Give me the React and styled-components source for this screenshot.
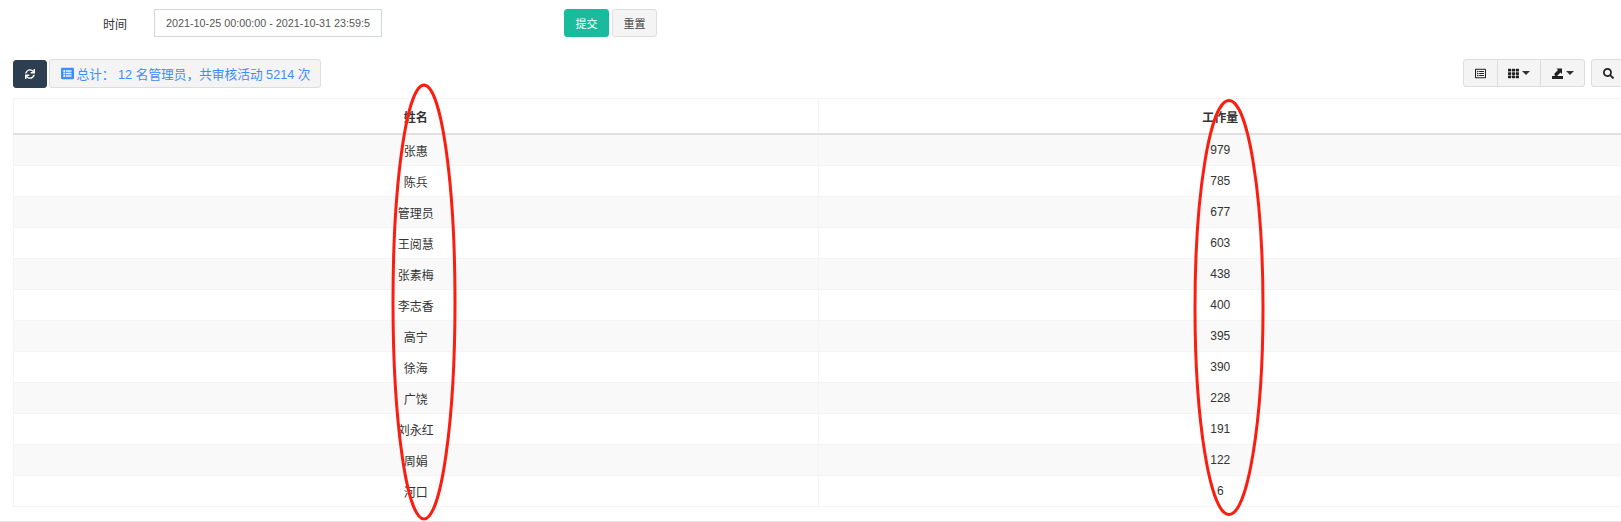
import React from 'react';
import styled, { createGlobalStyle } from 'styled-components';
import { FaSync, FaTh, FaSearch, FaRegListAlt, FaListAlt } from 'react-icons/fa';

const rows = [
  ['张惠', 979],
  ['陈兵', 785],
  ['管理员', 677],
  ['王阅慧', 603],
  ['张素梅', 438],
  ['李志香', 400],
  ['高宁', 395],
  ['徐海', 390],
  ['广饶', 228],
  ['刘永红', 191],
  ['周娟', 122],
  ['河口', 6],
];

const GlobalStyle = createGlobalStyle`
  html, body {
    margin: 0;
    background: #fff;
    overflow: hidden;
  }
  body {
    font-family: "Liberation Sans", "Noto Sans CJK SC", sans-serif;
    font-size: 12px;
    color: #333;
  }
`;

const Page = styled.div`
  position: relative;
  width: 1623px;
  height: 522px;
  box-sizing: border-box;
  padding: 9px 0 0 13px;
  overflow: hidden;
  border-bottom: 1px solid #e4e4e4;
`;

const SearchForm = styled.form`
  display: flex;
  align-items: center;
  height: 28px;
`;

const FieldLabel = styled.label`
  width: 114px;
  box-sizing: border-box;
  text-align: right;
  font-size: 12px;
  font-weight: 400;
`;

const DateInput = styled.div`
  width: 228px;
  height: 28px;
  margin-left: 27px;
  box-sizing: border-box;
  border: 1px solid #d2d6de;
  padding: 0 0 0 11px;
  line-height: 26px;
  font-size: 10.8px;
  color: #555;
  white-space: nowrap;
`;

const FormActions = styled.div`
  display: flex;
  gap: 3px;
  margin-left: 182px;
`;

const Button = styled.button`
  height: 28px;
  width: ${({ $width }) => $width || 45}px;
  padding: 0;
  display: inline-flex;
  align-items: center;
  justify-content: center;
  gap: 3px;
  box-sizing: border-box;
  font-family: inherit;
  font-size: 11px;
  border-radius: 3px;
  border: 1px solid ${({ $variant }) => ($variant === 'primary' ? '#18bc9c' : $variant === 'dark' ? '#2c3e50' : '#ddd')};
  background: ${({ $variant }) => ($variant === 'primary' ? '#18bc9c' : $variant === 'dark' ? '#2c3e50' : '#f4f4f4')};
  color: ${({ $variant }) => ($variant === 'primary' || $variant === 'dark' ? '#fff' : '#444')};
`;

const Toolbar = styled.div`
  display: flex;
  align-items: flex-start;
  justify-content: space-between;
  width: 1610px;
  margin-top: 22px;
  height: 39px;
`;

const ToolbarLeft = styled.div`
  display: flex;
  align-items: center;
  gap: 2px;
`;

const TotalBadge = styled.div`
  height: 29px;
  width: 272px;
  display: flex;
  align-items: center;
  justify-content: center;
  gap: 2px;
  padding-left: 2px;
  box-sizing: border-box;
  border: 1px solid #ddd;
  border-radius: 3px;
  background: #f4f4f4;
  color: #3c8dff;
  font-size: 12.7px;
  white-space: nowrap;
`;

const ToolbarRight = styled.div`
  display: flex;
  align-items: center;
  gap: 6px;
  margin-right: -2px;
`;

const ButtonGroup = styled.div`
  display: flex;

  & > button {
    border-radius: 0;
    margin-left: -1px;
  }
  & > button:first-child {
    border-radius: 3px 0 0 3px;
    margin-left: 0;
  }
  & > button:last-child {
    border-radius: 0 3px 3px 0;
  }
`;

const Caret = styled.span`
  width: 0;
  height: 0;
  border-left: 4px solid transparent;
  border-right: 4px solid transparent;
  border-top: 4px solid #333;
`;

const Table = styled.table`
  width: 1610px;
  table-layout: fixed;
  border-collapse: collapse;
  border: 1px solid #f4f4f4;
`;

const HeadCell = styled.th`
  height: 34px;
  padding: 0;
  font-size: 12px;
  font-weight: 700;
  text-align: center;
  color: #333;
  border: 1px solid #f4f4f4;
  border-bottom: 2px solid #e0e0e0;
`;

const Row = styled.tr`
  background: ${({ $striped }) => ($striped ? '#f9f9f9' : '#fff')};
`;

const Cell = styled.td`
  height: 30px;
  padding: 0;
  font-size: 12px;
  text-align: center;
  color: #333;
  border: 1px solid #f4f4f4;
`;

const Annotations = styled.svg`
  position: absolute;
  left: 0;
  top: 0;
  pointer-events: none;
`;

function ExportIcon() {
  return (
    <svg width="11" height="11" viewBox="0 0 11 11" fill="#222">
      <path d="M0 8h11v3H0z" />
      <path d="M2.500 7V5.500L6 2 4.500.5H10v5.500L8.500 4.500 5 8H3z" />
    </svg>
  );
}

export default function App() {
  return (
    <Page>
      <GlobalStyle />
      <SearchForm>
        <FieldLabel>时间</FieldLabel>
        <DateInput>2021-10-25 00:00:00 - 2021-10-31 23:59:5</DateInput>
        <FormActions>
          <Button type="button" $variant="primary">提交</Button>
          <Button type="button">重置</Button>
        </FormActions>
      </SearchForm>

      <Toolbar>
        <ToolbarLeft>
          <Button type="button" $variant="dark" $width={34}>
            <FaSync size={10} />
          </Button>
          <TotalBadge>
            <FaListAlt size={13} />
            <span>总计： 12 名管理员，共审核活动 5214 次</span>
          </TotalBadge>
        </ToolbarLeft>
        <ToolbarRight>
          <ButtonGroup>
            <Button type="button" $width={35}><FaRegListAlt size={11} color="#222" /></Button>
            <Button type="button" $width={44}><FaTh size={11} color="#222" /><Caret /></Button>
            <Button type="button" $width={45}><ExportIcon /><Caret /></Button>
          </ButtonGroup>
          <Button type="button" $width={34}><FaSearch size={11} color="#222" /></Button>
        </ToolbarRight>
      </Toolbar>

      <Table>
        <thead>
          <tr>
            <HeadCell>姓名</HeadCell>
            <HeadCell>工作量</HeadCell>
          </tr>
        </thead>
        <tbody>
          {rows.map(([name, count], i) => (
            <Row key={name} $striped={i % 2 === 0}>
              <Cell>{name}</Cell>
              <Cell>{count}</Cell>
            </Row>
          ))}
        </tbody>
      </Table>

      <Annotations width="1621" height="522" fill="none" stroke="#fb1d10" strokeWidth="3">
        <ellipse cx="424" cy="302" rx="31" ry="217" />
        <ellipse cx="1229" cy="307.500" rx="34" ry="207" />
      </Annotations>
    </Page>
  );
}
